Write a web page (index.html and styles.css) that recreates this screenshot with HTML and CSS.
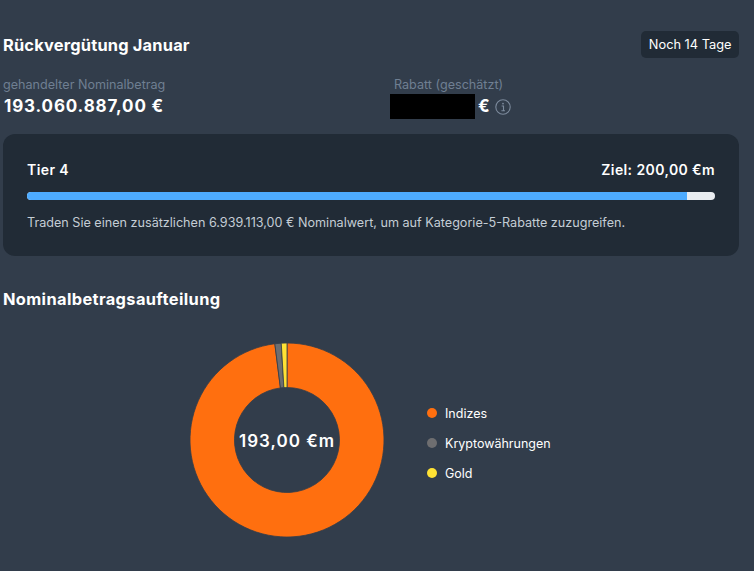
FILE: index.html
```html
<!DOCTYPE html>
<html lang="de">

<head>
     <meta charset="UTF-8">
     <meta name="viewport" content="width=device-width, initial-scale=1.0">
     <title>Rückvergütung Januar</title>
     <link rel="stylesheet" href="styles.css">
</head>

<body>
     <div class="page">
          <div class="head-row">
               <h2 class="title">Rückvergütung Januar</h2>
               <div class="badge">Noch 14 Tage</div>
          </div>

          <div class="stats">
               <div class="stat">
                    <div class="stat-label">gehandelter Nominalbetrag</div>
                    <div class="stat-value">193.060.887,00 €</div>
               </div>
               <div class="stat stat-rebate">
                    <div class="stat-label rebate-label">Rabatt (geschätzt)</div>
                    <div class="rebate-row">
                         <div class="redacted"></div>
                         <div class="stat-value">€</div>
                         <svg class="info-icon" width="16" height="16" viewBox="0 0 16 16" fill="none">
                              <circle cx="8" cy="8" r="7.2" stroke="#7c8a9c" stroke-width="1.1" />
                              <circle cx="8" cy="4.6" r="0.9" fill="#7c8a9c" />
                              <path d="M6.6 7h1.9v4.6M6.4 11.7h3.6" stroke="#7c8a9c" stroke-width="1.1" />
                         </svg>
                    </div>
               </div>
          </div>

          <div class="tier-card">
               <div class="tier-head">
                    <span>Tier 4</span>
                    <span>Ziel: 200,00 €m</span>
               </div>
               <div class="bar">
                    <div class="bar-fill" style="width: 95.9%"></div>
               </div>
               <p class="tier-note">Traden Sie einen zusätzlichen 6.939.113,00 € Nominalwert, um auf Kategorie-5-Rabatte zuzugreifen.</p>
          </div>

          <h2 class="title split-title">Nominalbetragsaufteilung</h2>

          <div class="chart-row">
               <div class="donut">
                    <svg width="194" height="194" viewBox="0 0 194 194">
                         <path fill="#ff6f0f" stroke="#323d4b" stroke-width="0.8" d="M97 0A97 97 0 1 1 84.84 .765L90.42 44.91A52.5 52.5 0 1 0 97 44.5Z" />
                         <path fill="#6e6e70" stroke="#323d4b" stroke-width="0.8" d="M84.84 .765A97 97 0 0 1 91.25 .17L93.89 44.59A52.5 52.5 0 0 0 90.42 44.91Z" />
                         <path fill="#ffe234" stroke="#323d4b" stroke-width="0.8" d="M91.25 .17A97 97 0 0 1 97 0L97 44.5A52.5 52.5 0 0 0 93.89 44.59Z" />
                    </svg>
                    <div class="donut-label">193,00 €m</div>
               </div>
               <ul class="legend">
                    <li><span class="dot dot-orange"></span>Indizes</li>
                    <li><span class="dot dot-grey"></span>Kryptowährungen</li>
                    <li><span class="dot dot-yellow"></span>Gold</li>
               </ul>
          </div>
     </div>
</body>

</html>
```

FILE: styles.css
```css
* {
     padding: 0;
     margin: 0;
     box-sizing: border-box;
     font-family: Inter, 'Noto Sans', sans-serif;
}

html,
body {
     width: 100%;
     height: 100%;
     overflow: hidden;
}

body {
     background: #323d4b;
     color: #fff;
}

.page {
     width: 736px;
     margin-left: 3px;
     padding-top: 31px;
}

.head-row {
     display: flex;
     justify-content: space-between;
     align-items: flex-start;
     height: 27px;
}

.title {
     font-size: 16.4px;
     font-weight: 700;
     line-height: 29px;
     letter-spacing: .2px;
}

.badge {
     background: #212b36;
     border-radius: 5px;
     height: 27px;
     line-height: 27px;
     padding: 0 7.5px;
     font-size: 12.8px;
}

.stats {
     display: grid;
     grid-template-columns: 387px 1fr;
     margin-top: 19px;
}

.stat-label {
     font-size: 12.6px;
     line-height: 15px;
     color: #6f7f92;
}

.stat-value {
     margin-top: 2px;
     padding-left: 1px;
     font-size: 17px;
     font-weight: 700;
     line-height: 25px;
     letter-spacing: .85px;
}

.stat-rebate {
     display: flex;
     flex-direction: column;
}

.rebate-label {
     padding-left: 4px;
}

.rebate-row {
     display: flex;
     align-items: center;
     height: 25px;
     margin-top: 2px;
}

.rebate-row .stat-value {
     margin-top: 0;
     padding-left: 0;
}

.redacted {
     width: 85px;
     height: 25px;
     background: #000;
     margin-right: 3px;
}

.info-icon {
     margin-left: 4px;
}

.tier-card {
     background: #212b36;
     border-radius: 12px;
     height: 122px;
     margin-top: 15px;
     padding: 26px 24px 0;
}

.tier-head {
     display: flex;
     justify-content: space-between;
     font-size: 14px;
     font-weight: 600;
     line-height: 20px;
     letter-spacing: .4px;
}

.bar {
     height: 8px;
     margin-top: 12px;
     border-radius: 4px;
     background: #e9edf1;
     overflow: hidden;
}

.bar-fill {
     height: 100%;
     background: #4dabff;
}

.tier-note {
     margin-top: 14px;
     font-size: 12.62px;
     line-height: 17px;
     color: #c4cdd5;
}

.split-title {
     margin-top: 29px;
     letter-spacing: .37px;
}

.chart-row {
     display: flex;
     align-items: center;
     margin-top: 29px;
     padding-left: 187px;
}

.donut {
     position: relative;
     width: 194px;
     height: 194px;
}

.donut svg {
     display: block;
}

.donut-label {
     position: absolute;
     inset: 0;
     padding-top: 2px;
     display: flex;
     align-items: center;
     justify-content: center;
     font-size: 17px;
     font-weight: 600;
     letter-spacing: 1px;
}

.legend {
     list-style: none;
     margin-left: 43px;
     margin-top: 6px;
}

.legend li {
     display: flex;
     align-items: center;
     gap: 8px;
     height: 30px;
     font-size: 12.5px;
}

.dot {
     width: 10px;
     height: 10px;
     border-radius: 50%;
}

.dot-orange {
     background: #ff6f0f;
}

.dot-grey {
     background: #6e6e70;
}

.dot-yellow {
     background: #ffe234;
}
```
